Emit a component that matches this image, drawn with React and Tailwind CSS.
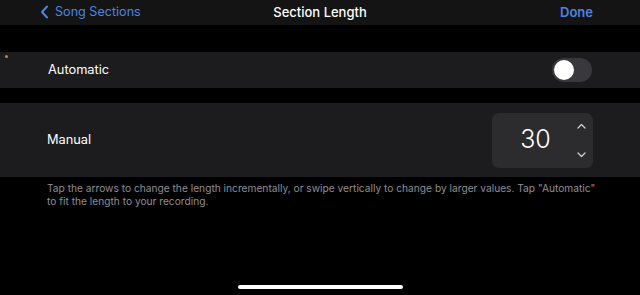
export default function App() {
  return (
    <div className="w-[640px] h-[295px] bg-black overflow-hidden flex flex-col" style={{ fontFamily: "Inter, 'Liberation Sans', sans-serif" }}>
      <div className="h-[25px] bg-[#141414] flex items-center px-[40px] relative">
        <div className="flex items-center gap-[6px] text-[#4a86e0] text-[12.6px]">
          <svg width="9" height="14" viewBox="0 0 9 14" fill="none">
            <path d="M7 1.5L2 7l5 5.5" stroke="#4a86e0" strokeWidth="2" strokeLinecap="round" strokeLinejoin="round" />
          </svg>
          <span>Song Sections</span>
        </div>
        <div className="absolute left-0 right-0 text-center text-white text-[13px] font-medium">Section Length</div>
        <div className="ml-auto mr-[7px] text-[#4a86e0] text-[13px] font-semibold">Done</div>
      </div>
      <div className="h-[27px] relative">
        <div className="absolute left-[5px] top-[30px] w-[3px] h-[3px] rounded-full bg-[#c98a2a]"></div>
      </div>
      <div className="h-[36px] bg-[#1c1c1e] flex items-center pl-[48px] pr-[48px]">
        <span className="text-white text-[12.8px]">Automatic</span>
        <div className="ml-auto w-[40px] h-[24px] rounded-full bg-[#39393d] p-[2px]">
          <div className="w-[20px] h-[20px] rounded-full bg-white"></div>
        </div>
      </div>
      <div className="h-[15px]"></div>
      <div className="h-[74px] bg-[#1c1c1e] flex items-center pl-[47px] pr-[47px]">
        <span className="text-white text-[12.8px]">Manual</span>
        <div className="ml-auto w-[101px] h-[55px] rounded-[7px] bg-[#2c2c2e] flex items-center">
          <span className="flex-1 text-center text-white text-[25px] font-light pl-[10px]">30</span>
          <div className="w-[24px] h-full flex flex-col items-center justify-between py-[10px]">
            <svg width="9" height="6" viewBox="0 0 9 6" fill="none">
              <path d="M1 5l3.5-3.5L8 5" stroke="#d0d0d0" strokeWidth="1.3" strokeLinecap="round" strokeLinejoin="round" />
            </svg>
            <svg width="9" height="6" viewBox="0 0 9 6" fill="none">
              <path d="M1 1l3.5 3.5L8 1" stroke="#d0d0d0" strokeWidth="1.3" strokeLinecap="round" strokeLinejoin="round" />
            </svg>
          </div>
        </div>
      </div>
      <div className="pl-[47px] pr-[44px] pt-[5px] text-[#8e8e93] text-[10.2px] leading-[13px]">
        Tap the arrows to change the length incrementally, or swipe vertically to change by larger values. Tap "Automatic" to fit the length to your recording.
      </div>
      <div className="flex-1 flex items-end justify-center pb-[6px]">
        <div className="w-[165px] h-[4px] rounded-full bg-white"></div>
      </div>
    </div>
  );
}
